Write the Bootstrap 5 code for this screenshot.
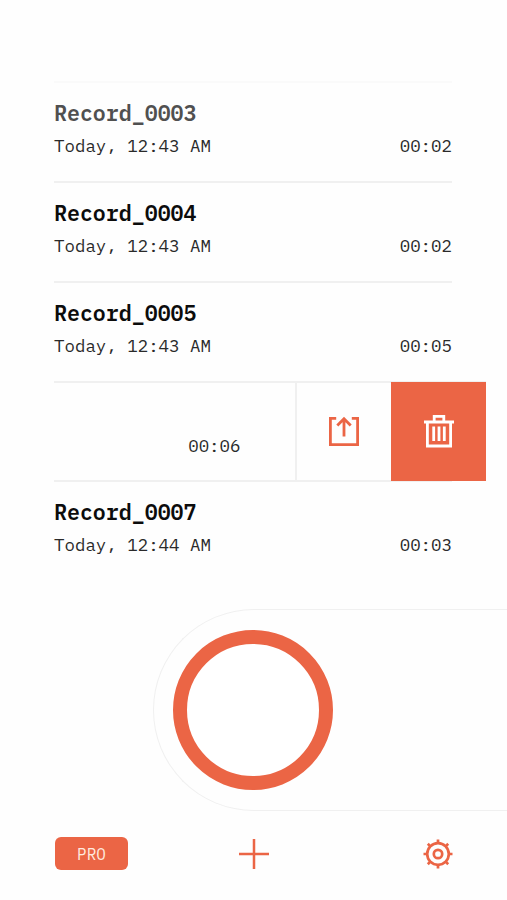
<!DOCTYPE html>
<html lang="en">
<head>
<meta charset="utf-8">
<meta name="viewport" content="width=device-width, initial-scale=1">
<title>Records</title>
<link href="https://cdn.jsdelivr.net/npm/bootstrap@5.3.0/dist/css/bootstrap.min.css" rel="stylesheet">
<style>
:root{--accent:#eb6545;--hairline:#f0f0f0}
body{height:900px;background:#fefefe;color:#0c0c0c;font-family:"IBM Plex Mono","Liberation Mono",monospace}
.records{padding:81px 21px 0 54px}
.rec{height:100px;margin-right:34px;border-top:2px solid var(--hairline);padding-top:15px}
.rec.faded{border-color:#fafafa}
.rec.faded .rec-title{color:#505050}
.rec-title{font-size:21.6px;line-height:31px;font-weight:600}
.rec-info{font-size:17.45px;line-height:34px;color:#2a2a2a}
.swiped{height:99px;border-top:2px solid var(--hairline)}
.swiped .time-cell{width:187px;padding-top:46px}
.action{width:95px;height:99px;margin-top:-1px}
.action-share{margin-left:54px;width:97px;border-left:2px solid var(--hairline);color:var(--accent)}
.action-delete{background:var(--accent);color:#fff}
.recorder{margin-left:153px;height:202px;margin-top:29px;border:1px solid #f0f0f0;border-right:0;border-radius:101px 0 0 101px;padding-left:19px}
.rec-button{width:160px;height:160px;border:14px solid var(--accent);background:#fff}
.tools{padding:26px 54px 0 55px;color:var(--accent)}
.tool{width:73px}
.pro{height:33px;border-radius:6px;background:var(--accent);color:#ffe9df;font-size:16px;line-height:34px}
.plus-gap{margin-left:111px}
svg{display:block;fill:none;stroke:currentColor}
</style>
</head>
<body class="overflow-hidden">
<main class="records">
  <article class="rec faded">
    <div class="rec-title">Record_0003</div>
    <div class="rec-info d-flex justify-content-between"><span>Today, 12:43 AM</span><span>00:02</span></div>
  </article>
  <article class="rec">
    <div class="rec-title">Record_0004</div>
    <div class="rec-info d-flex justify-content-between"><span>Today, 12:43 AM</span><span>00:02</span></div>
  </article>
  <article class="rec">
    <div class="rec-title">Record_0005</div>
    <div class="rec-info d-flex justify-content-between"><span>Today, 12:43 AM</span><span>00:05</span></div>
  </article>
  <article class="swiped d-flex">
    <div class="time-cell rec-info text-end">00:06</div>
    <div class="action action-share d-flex align-items-center justify-content-center">
      <svg width="32" height="34" viewBox="0 0 32 34" stroke-width="2.8"><path d="M8.2 3.4H2.4v26.2h27.2V3.4h-5.8M16 21.5V4.2M9.3 10.5 16 3.8l6.7 6.7"/></svg>
    </div>
    <div class="action action-delete d-flex align-items-center justify-content-center">
      <svg width="32" height="36" viewBox="0 0 32 36" stroke-width="2.8"><path d="M1 8h30M11.2 8V2.4h9.6V8M4.4 8v24h23.2V8M10.7 12.5v14.5M16 12.5v14.5M21.3 12.5v14.5"/></svg>
    </div>
  </article>
  <article class="rec">
    <div class="rec-title">Record_0007</div>
    <div class="rec-info d-flex justify-content-between"><span>Today, 12:44 AM</span><span>00:03</span></div>
  </article>
</main>
<section class="recorder d-flex align-items-center">
  <div class="rec-button rounded-circle"></div>
</section>
<footer class="tools d-flex align-items-center">
  <div class="tool pro text-center">PRO</div>
  <svg class="plus-gap" width="30" height="30" viewBox="0 0 30 30" stroke-width="2.5"><path d="M15 0v30M0 15h30"/></svg>
  <svg class="ms-auto" width="30" height="30" viewBox="0 0 30 30" stroke-width="2.7"><circle cx="15" cy="15" r="10.8"/><circle cx="15" cy="15" r="4.2"/><path d="M15 .5v4M15 25.5v4M.5 15h4M25.5 15h4M4.8 4.8l2.8 2.8M22.4 22.4l2.8 2.8M25.2 4.8l-2.8 2.8M7.6 22.4l-2.8 2.8"/></svg>
</footer>
<script src="https://cdn.jsdelivr.net/npm/bootstrap@5.3.0/dist/js/bootstrap.bundle.min.js"></script>
</body>
</html>
